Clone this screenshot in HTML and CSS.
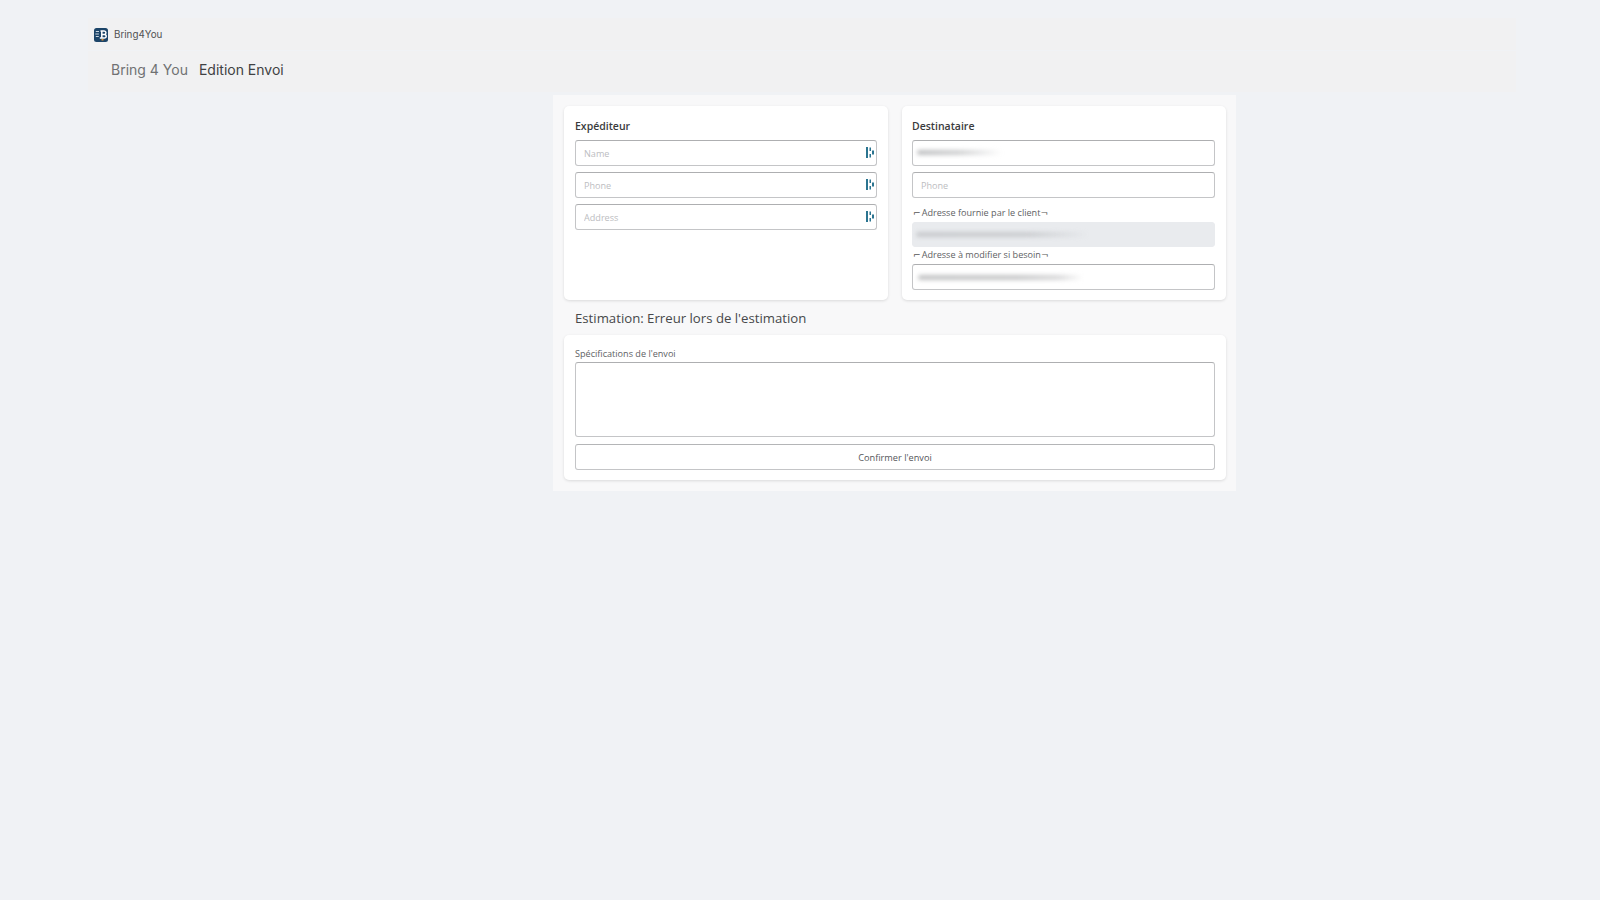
FILE: index.html
```html
<!DOCTYPE html>
<html lang="fr">
<head>
<meta charset="utf-8">
<title>Edition Envoi</title>
<link rel="stylesheet" href="styles.css">
</head>
<body>
<header class="site-header">
  <div class="brand-row">
    <svg class="logo" viewBox="0 0 14 14" aria-hidden="true">
      <rect width="14" height="14" rx="2.500" fill="#1c4468"/>
      <path d="M6.500 3h3.700a1.700 1.700 0 0 1 0 3.500H7.200M7.200 6.500h3.200a1.800 1.800 0 0 1 0 3.600H5.800M7.800 3v7" fill="none" stroke="#fff" stroke-width="1.500"/>
      <path d="M1.800 3.500h3.200M1.300 6h3.600M1.800 8.500h3" stroke="#dfe7ee" stroke-width=".9"/>
      <rect x="7.500" y="11" width="2" height="1.500" fill="#e8912d"/>
    </svg>
    <span class="brand-name">Bring4You</span>
  </div>
  <nav class="crumbs">
    <span class="crumb-root">Bring 4 You</span>
    <span class="crumb-current">Edition Envoi</span>
  </nav>
</header>
<main class="main">
  <div class="panel">
    <div class="cards">
      <section class="card">
        <h2 class="card-title">Expéditeur</h2>
        <div class="fields">
          <div class="field">
            <input class="input" placeholder="Name">
            <svg class="pm-icon" viewBox="0 0 8 11" aria-hidden="true"><use href="#pm"/></svg>
          </div>
          <div class="field">
            <input class="input" placeholder="Phone">
            <svg class="pm-icon" viewBox="0 0 8 11" aria-hidden="true"><use href="#pm"/></svg>
          </div>
          <div class="field">
            <input class="input" placeholder="Address">
            <svg class="pm-icon" viewBox="0 0 8 11" aria-hidden="true"><use href="#pm"/></svg>
          </div>
        </div>
      </section>
      <section class="card card-right">
        <h2 class="card-title">Destinataire</h2>
        <div class="fields">
          <div class="field">
            <input class="input">
            <span class="smear smear-name"></span>
          </div>
          <div class="field">
            <input class="input" placeholder="Phone">
          </div>
          <div class="stack">
            <div class="addr-label"><span class="mark mark-open">⌐</span>Adresse fournie par le client<span class="mark">¬</span></div>
            <div class="field">
              <input class="input input-off" disabled>
              <span class="smear smear-given"></span>
            </div>
            <div class="addr-label addr-label-2"><span class="mark mark-open">⌐</span>Adresse à modifier si besoin<span class="mark">¬</span></div>
            <div class="field">
              <input class="input">
              <span class="smear smear-edit"></span>
            </div>
          </div>
        </div>
      </section>
    </div>
    <h3 class="estimate">Estimation: Erreur lors de l'estimation</h3>
    <section class="card card-spec">
      <label class="spec-label" for="spec">Spécifications de l'envoi</label>
      <textarea class="textarea" id="spec"></textarea>
      <button class="confirm" type="button">Confirmer l'envoi</button>
    </section>
  </div>
</main>
<svg class="defs" aria-hidden="true">
  <defs>
    <g id="pm" fill="#2a7490">
      <rect x="0" y="0" width="2" height="11"/>
      <rect x="3.500" y="0.500" width="1.500" height="3.500"/>
      <rect x="3.500" y="7" width="1.500" height="3.500"/>
      <rect x="6" y="3.500" width="2" height="4"/>
    </g>
  </defs>
</svg>
</body>
</html>
```

FILE: styles.css
```css
* { box-sizing: border-box; }
html, body { margin: 0; padding: 0; }
body {
  min-height: 900px;
  background: #f0f2f5;
  font-family: "Open Sans", "Noto Sans", sans-serif;
  color: #333;
}
.site-header {
  margin: 0 84px 0 88px;
  padding-top: 18px;
}
.brand-row {
  display: flex;
  align-items: center;
  height: 32px;
  padding: 1px 0 0 6px;
  gap: 6px;
  background: #f1f1f2;
}
.logo { width: 14px; height: 14px; display: block; }
.brand-name { font: 400 9.800px "Inter", sans-serif; color: #505153; }
.crumbs {
  display: flex;
  align-items: center;
  gap: 11px;
  height: 41px;
  margin-top: 1px;
  padding: 0 0 4px 23px;
  background: #f1f1f2;
  font: 400 14px "Inter", sans-serif;
}
.crumb-root { color: #707173; }
.crumb-current { color: #404143; }
.main { padding: 3px 0 0 553px; }
.panel {
  width: 683px;
  height: 396px;
  padding: 11px 10px 10px 11px;
  background: #f8f8f9;
}
.cards { display: flex; gap: 14px; }
.card {
  background: #fff;
  border-radius: 5px;
  box-shadow: 0 1px 3px rgba(0, 0, 0, .12);
}
.cards .card {
  flex: 0 0 324px;
  height: 194px;
  padding: 0 11px;
}
.cards .card-right { padding-left: 10px; }
.card-title {
  margin: 0;
  height: 34px;
  font: 600 10.500px/40px "Open Sans", sans-serif;
  color: #3a3b3d;
}
.fields { display: flex; flex-direction: column; gap: 6.500px; }
.field { position: relative; }
.input {
  display: block;
  width: 100%;
  height: 25.500px;
  padding: 2px 8px 0;
  border: 1px solid #c4c5c7;
  border-top-color: #aeafb1;
  border-radius: 3px;
  background: #fff;
  font: 400 9.100px "Open Sans", sans-serif;
  outline: none;
}
.input::placeholder { color: #bcbdbf; opacity: 1; }
.input-off { background: #e9ebee; border-color: #e9ebee; }
.pm-icon {
  position: absolute;
  right: 3px;
  top: 7px;
  width: 8px;
  height: 11px;
}
.addr-label {
  height: 17.500px;
  line-height: 17px;
  font-size: 9.100px;
  color: #606164;
  white-space: nowrap;
}
.addr-label-2 { height: 17px; line-height: 15px; }
.mark { font-family: "DejaVu Sans", sans-serif; font-size: 9.100px; color: #555; }
.mark-open { margin-right: 1px; margin-left: 1px; }
.smear {
  position: absolute;
  left: 5px;
  height: 5px;
  border-radius: 3px;
  filter: blur(2px);
}
.smear-name {
  top: 10px;
  width: 85px;
  background: linear-gradient(90deg, #bdbec0, #cfd0d1 50%, rgba(225, 225, 225, 0));
}
.smear-given {
  top: 10px;
  left: 4px;
  width: 172px;
  background: linear-gradient(90deg, #c8cacd, #cacccf 65%, rgba(228, 230, 233, 0));
}
.smear-edit {
  top: 11px;
  left: 6px;
  width: 165px;
  background: linear-gradient(90deg, #c2c3c4, #c6c7c8 60%, #d8d8d9 85%, rgba(232, 232, 232, 0));
}
.estimate {
  margin: 0;
  height: 35px;
  padding-left: 11px;
  font: 400 13.200px/37px "Open Sans", sans-serif;
  color: #47484a;
}
.card-spec {
  display: flex;
  flex-direction: column;
  height: 145px;
  padding: 0 11px;
}
.spec-label {
  height: 27px;
  line-height: 37px;
  font-size: 9.100px;
  color: #606164;
}
.textarea {
  display: block;
  width: 100%;
  height: 75px;
  border: 1px solid #c4c5c7;
  border-top-color: #aeafb1;
  border-radius: 3px;
  background: #fff;
  resize: none;
  outline: none;
}
.confirm {
  display: block;
  width: 100%;
  height: 26px;
  margin-top: 7px;
  border: 1px solid #c4c5c7;
  border-top-color: #b4b5b7;
  border-radius: 3px;
  background: #fff;
  font: 400 9.200px "Open Sans", sans-serif;
  color: #55565a;
}
.defs { position: absolute; width: 0; height: 0; }
```
